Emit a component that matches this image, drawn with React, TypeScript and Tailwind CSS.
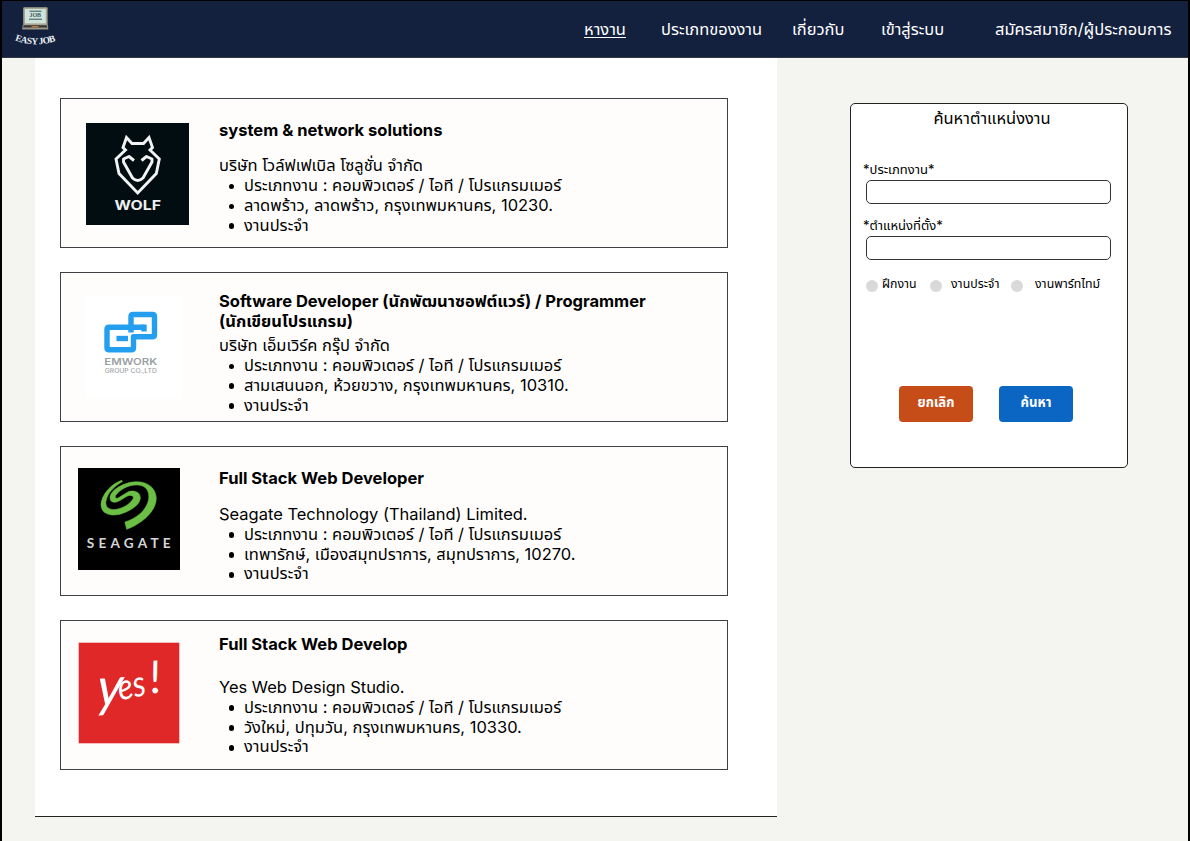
import type { ReactNode } from 'react';

function EasyJobLogo() {
  return (
    <svg width="48" height="44" viewBox="12 4 48 44" role="img" aria-label="Easy Job">
      <rect x="23.2" y="7.2" width="24.4" height="18.6" rx="1" fill="#a9a48f" />
      <rect x="25" y="9" width="20.8" height="14.4" fill="#cfe3dd" />
      <rect x="29.5" y="10.6" width="12" height="1.3" fill="#5f7575" />
      <rect x="29" y="18.6" width="13" height="1.3" fill="#5f7575" />
      <text x="35.3" y="17.4" textAnchor="middle" fontSize="6" fontWeight="700" fontFamily="Liberation Serif" fill="#44595c">JOB</text>
      <path d="M22.6 25h25.4l.3 4.4H22.2z" fill="#9b9683" />
      <path d="M23.6 25.2h23.2l.5 2.2H23.2z" fill="#35383b" />
      <rect x="31.5" y="26.2" width="7" height="1.1" fill="#d88948" />
      <path id="arc" d="M14.8 40.2Q35.5 48.4 58 40.2" fill="none" />
      <text fontFamily="Liberation Serif, serif" fontSize="9.4" fontWeight="700" fill="#eef2f7">
        <textPath href="#arc" textLength="42">EASY JOB</textPath>
      </text>
    </svg>
  );
}

function WolfLogo() {
  return (
    <svg width="103" height="102" viewBox="0 0 103 102" className="block">
      <rect width="103" height="102" fill="#020d12" />
      <g fill="none" stroke="#f2f4f4" strokeWidth="2.9">
        <path d="M40.5 14.5 37 24.5 39.5 27 30 36 33 50.5 51.7 70 70.3 50.5 73.3 36 64 27 66.5 24.5 63 14.5 57.5 20.5H46Z" />
        <path strokeLinejoin="round" d="M48 37.5 43 33.5 37.5 36V39L46.5 55Q51.7 60 57 55L66 39V36L60.5 33.5 55.5 37.5" />
      </g>
      <text x="51.7" y="87.4" textAnchor="middle" textLength="46.5" lengthAdjust="spacingAndGlyphs" fontFamily="Inter, sans-serif" fontWeight="700" fontSize="13.4" fill="#eef0f0">WOLF</text>
    </svg>
  );
}

function EmworkLogo() {
  return (
    <svg width="97" height="103" viewBox="0 0 97 103" className="block">
      <rect width="97" height="103" fill="#fff" />
      <g fill="none" stroke="#249ff0" strokeWidth="5.4" strokeLinejoin="round">
        <path d="M59.5 31.2H24Q22 31.2 22 33.2V51.8Q22 53.8 24 53.8H46.5Q48.5 53.8 48.5 51.8V40.8H67.5Q69.5 40.8 69.5 38.8V20.5Q69.5 18.5 67.5 18.5H48Q46 18.5 46 20.5V36.5" />
        <path d="M31.5 42.5H43" />
        <path d="M59 28.6V35.5" />
      </g>
      <text x="45.8" y="69" textAnchor="middle" textLength="53" lengthAdjust="spacingAndGlyphs" fontFamily="Inter, sans-serif" fontSize="9" fontWeight="600" fill="#9aa0a2">EMWORK</text>
      <text x="45.8" y="76.8" textAnchor="middle" textLength="52" lengthAdjust="spacingAndGlyphs" fontFamily="Inter, sans-serif" fontSize="5.8" fontWeight="500" fill="#a0a5a7">GROUP CO.,LTD</text>
    </svg>
  );
}

function SeagateLogo() {
  return (
    <svg width="102" height="102" viewBox="0 0 102 102" className="block">
      <rect width="102" height="102" fill="#000" />
      <path
        fill="#6cbf45"
        stroke="#6cbf45"
        strokeWidth=".5"
        d="M43.7 12.3C33 16 23 27 23 37.5C24 48 37 49 47 44.5C55 41 62.5 36 62.3 29.5C62 23 54 21.5 49 24.5L40 30C38 31 36.5 29 38 27C42 21.5 50 17 58.7 16.9C68 17 72 23 70.5 32C68 43 58 50.5 46.8 54L48.7 61.3C63 56 78.3 44 78.3 30C78 19 68 13 57 13.7C45 14.5 33 22 32 29C31.5 35 37 35.5 42 32.5L49 28.3C53 26.2 56.5 28 55 31C52 36 44 41 37 41.5C29 42 26.5 37 28.5 31C31 23 37 18 44.5 13.5Z"
      />
      <text x="8.7" y="80.2" textLength="84" fontFamily="Lato, sans-serif" fontSize="13.6" fontWeight="700" fill="#d6d6d6">SEAGATE</text>
    </svg>
  );
}

function YesLogo() {
  return (
    <svg width="102" height="102" viewBox="0 0 102 102" className="block">
      <rect x=".7" y=".7" width="100.6" height="100.6" fill="#e02828" />
      <g fill="#fff" fontFamily="Lato, sans-serif" fontStyle="italic">
        <text transform="translate(18 64.5) rotate(-4) skewX(-8)" fontSize="54" textLength="26" lengthAdjust="spacingAndGlyphs">y</text>
        <text transform="translate(42 58.5) rotate(-12)" fontSize="36" textLength="28" lengthAdjust="spacingAndGlyphs">es</text>
        <text transform="translate(73 51.5) rotate(-6)" fontSize="45">!</text>
      </g>
    </svg>
  );
}

type Job = {
  title: string;
  company: string;
  location: string;
  logo: ReactNode;
  logoPad: string;
  textPad: string;
  gap: string;
};

const jobs: Job[] = [
  {
    title: 'system & network solutions',
    company: 'บริษัท โวล์ฟเฟเบิล โซลูชั่น จำกัด',
    location: 'ลาดพร้าว, ลาดพร้าว, กรุงเทพมหานคร, 10230.',
    logo: <WolfLogo />,
    logoPad: 'pt-[24px] pl-[25px]',
    textPad: 'pt-[21.5px]',
    gap: 'mt-[16px]',
  },
  {
    title: 'Software Developer (นักพัฒนาซอฟต์แวร์) / Programmer (นักเขียนโปรแกรม)',
    company: 'บริษัท เอ็มเวิร์ค กรุ๊ป จำกัด',
    location: 'สามเสนนอก, ห้วยขวาง, กรุงเทพมหานคร, 10310.',
    logo: <EmworkLogo />,
    logoPad: 'pt-[23px] pl-[24px]',
    textPad: 'pt-[19px]',
    gap: 'mt-[4.6px]',
  },
  {
    title: 'Full Stack Web Developer',
    company: 'Seagate Technology (Thailand) Limited.',
    location: 'เทพารักษ์, เมืองสมุทปราการ, สมุทปราการ, 10270.',
    logo: <SeagateLogo />,
    logoPad: 'pt-[21px] pl-[17px]',
    textPad: 'pt-[21.5px]',
    gap: 'mt-[16.7px]',
  },
  {
    title: 'Full Stack Web Develop',
    company: 'Yes Web Design Studio.',
    location: 'วังใหม่, ปทุมวัน, กรุงเทพมหานคร, 10330.',
    logo: <YesLogo />,
    logoPad: 'pt-[21px] pl-[17px]',
    textPad: 'pt-[14px]',
    gap: 'mt-[23.2px]',
  },
];

function Bullet({ children }: { children: ReactNode }) {
  return (
    <li className="flex items-center whitespace-nowrap before:mt-px before:mr-[10px] before:ml-[9.5px] before:size-[5.5px] before:shrink-0 before:rounded-full before:bg-black">
      {children}
    </li>
  );
}

function JobCard({ job }: { job: Job }) {
  return (
    <article className="flex h-[150px] w-[668px] border border-[#3f4044] bg-[#fefdfc]">
      <div className={`w-[158px] shrink-0 ${job.logoPad}`}>{job.logo}</div>
      <div className={`w-[440px] text-[16.48px] leading-[19.8px] ${job.textPad}`}>
        <h2 className="text-[16.52px] font-bold">{job.title}</h2>
        <p className={job.gap}>{job.company}</p>
        <ul>
          <Bullet>ประเภทงาน : คอมพิวเตอร์ / ไอที / โปรแกรมเมอร์</Bullet>
          <Bullet>{job.location}</Bullet>
          <Bullet>งานประจำ</Bullet>
        </ul>
      </div>
    </article>
  );
}

function Header() {
  return (
    <header className="flex h-[57px] items-start border-b border-[#33363f] bg-[#13213f] text-[16.46px] leading-5 whitespace-nowrap text-white">
      <div className="w-[582px] pt-[3px] pl-[10px]"><EasyJobLogo /></div>
      <nav className="flex pt-[18px]">
        <a className="w-[77px] underline decoration-1 underline-offset-[2px]">หางาน</a>
        <a className="w-[131px]">ประเภทของงาน</a>
        <a className="w-[89px]">เกี่ยวกับ</a>
        <a className="w-[114px]">เข้าสู่ระบบ</a>
        <a>สมัครสมาชิก/ผู้ประกอบการ</a>
      </nav>
    </header>
  );
}

function SearchPanel() {
  return (
    <aside className="mt-[45px] ml-[73px] h-[365px] w-[278px] rounded-[5px] border border-[#222] bg-white px-[12px] pt-[4px]">
      <h2 className="pl-[6px] text-center text-[16.46px] leading-5">ค้นหาตำแหน่งงาน</h2>
      <label className="mt-[33px] block h-[19px] text-[13px] leading-4">*ประเภทงาน*</label>
      <input className="ml-[3px] block h-[24px] w-[245px] rounded-[5px] border border-[#333] bg-white px-2 text-xs" />
      <label className="mt-[13px] block h-[19px] text-[13px] leading-4">*ตำแหน่งที่ตั้ง*</label>
      <input className="ml-[3px] block h-[24px] w-[245px] rounded-[5px] border border-[#333] bg-white px-2 text-xs" />
      <div className="mt-[16px] flex items-start pl-[3px] text-[12.33px] leading-4 whitespace-nowrap">
        <span className="mt-[4px] mr-[4px] size-[12px] shrink-0 rounded-full bg-[#d9d9d9]" />
        <span className="w-[48px]">ฝึกงาน</span>
        <span className="mt-[4px] mr-[9px] size-[12px] shrink-0 rounded-full bg-[#d9d9d9]" />
        <span className="w-[60px]">งานประจำ</span>
        <span className="mt-[4px] mr-[12px] size-[12px] shrink-0 rounded-full bg-[#d9d9d9]" />
        <span>งานพาร์ทไทม์</span>
      </div>
      <div className="mt-[94px] flex gap-[26px] pl-[36px] text-[13.15px] font-bold text-white">
        <button className="h-[36px] w-[74px] rounded-[4px] bg-[#c74d18] pb-[2px]">ยกเลิก</button>
        <button className="h-[36px] w-[74px] rounded-[4px] bg-[#0b66c3] pb-[2px]">ค้นหา</button>
      </div>
    </aside>
  );
}

export default function App() {
  return (
    <div className="h-[841px] w-[1190px] overflow-hidden border-x-2 border-t border-black bg-[#f4f5f0] font-['Inter','Noto_Sans_Thai','Noto_Sans',sans-serif] text-black">
      <Header />
      <div className="flex items-start pl-[33px]">
        <main className="flex h-[759px] w-[742px] flex-col gap-[24px] border-b border-[#222] bg-white pt-[40px] pl-[25px]">
          {jobs.map((job) => <JobCard key={job.title} job={job} />)}
        </main>
        <SearchPanel />
      </div>
    </div>
  );
}
